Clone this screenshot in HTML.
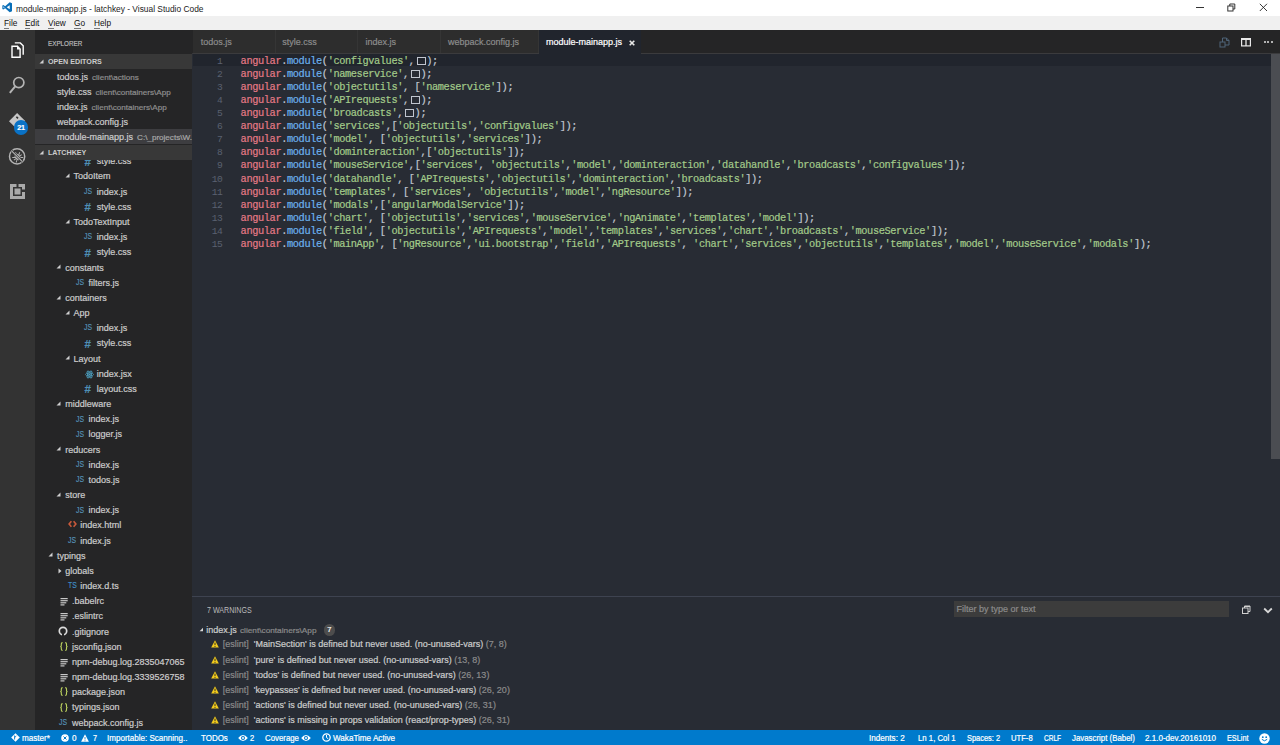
<!DOCTYPE html><html><head><meta charset="utf-8"><style>
*{margin:0;padding:0;box-sizing:border-box}
html,body{width:1280px;height:745px;overflow:hidden;background:#252526;font-family:"Liberation Sans",sans-serif}
.a{position:absolute;white-space:nowrap}
.a{-webkit-text-stroke-width:0.2px}
.mono{font-family:"Liberation Mono",monospace}
.lt{-webkit-text-stroke-width:0}
.box{display:inline-block;width:9px;height:8.5px;border:1px solid #c0c5ce;vertical-align:-1.2px;margin-left:2px;margin-right:0.58px}
</style></head><body>
<div class="a" style="left:0;top:0;width:1280px;height:15.5px;background:#fff"></div>
<div class="a" style="left:0;top:15.5px;width:1280px;height:14.5px;background:#f0f0f0"></div>
<svg class="a" style="left:1.7px;top:2.2px" width="10.5" height="10.5" viewBox="0 0 12 12">
<path d="M8.8 0.3 L11.6 1.5 V10.5 L8.8 11.7 L3.6 7.1 L1.5 8.6 L0.4 8 V4 L1.5 3.4 L3.6 4.9 Z M8.8 3.6 L5.4 6 L8.8 8.4 Z M1.7 4.8 V7.2 L3 6 Z" fill="#0a6fb8"/></svg>
<div class="a lt" style="left:16px;top:2.5px;font-size:8.4px;line-height:13px;color:#222">module-mainapp.js - latchkey - Visual Studio Code</div>
<div class="a lt" style="left:4px;top:17px;font-size:8.3px;line-height:13px;color:#111">File</div>
<div class="a" style="left:4px;top:28px;width:4.5px;height:0.8px;background:#777"></div>
<div class="a lt" style="left:25px;top:17px;font-size:8.3px;line-height:13px;color:#111">Edit</div>
<div class="a" style="left:25px;top:28px;width:5px;height:0.8px;background:#777"></div>
<div class="a lt" style="left:48px;top:17px;font-size:8.3px;line-height:13px;color:#111">View</div>
<div class="a" style="left:48px;top:28px;width:6px;height:0.8px;background:#777"></div>
<div class="a lt" style="left:74px;top:17px;font-size:8.3px;line-height:13px;color:#111">Go</div>
<div class="a" style="left:74px;top:28px;width:6.5px;height:0.8px;background:#777"></div>
<div class="a lt" style="left:94px;top:17px;font-size:8.3px;line-height:13px;color:#111">Help</div>
<div class="a" style="left:94px;top:28px;width:6px;height:0.8px;background:#777"></div>
<div class="a" style="left:1196px;top:6.6px;width:7.5px;height:1px;background:#333"></div>
<svg class="a" style="left:1227px;top:2.5px" width="9" height="9" viewBox="0 0 9 9"><rect x="0.8" y="3" width="5.2" height="5" fill="none" stroke="#333" stroke-width="1"/><path d="M2.8 3 V1 H7.8 V6 H6" fill="none" stroke="#333" stroke-width="1"/></svg>
<svg class="a" style="left:1258.5px;top:2.5px" width="9" height="9" viewBox="0 0 9 9"><path d="M0.8 0.8 L8 8 M8 0.8 L0.8 8" stroke="#222" stroke-width="0.9"/></svg>
<div class="a" style="left:0;top:29.6px;width:1280px;height:1px;background:#1a1a1a"></div>
<div class="a" style="left:0;top:30px;width:35px;height:700px;background:#333333"></div>
<div class="a" style="left:35px;top:30px;width:157px;height:700px;background:#252526"></div>
<div class="a" style="left:48px;top:38.5px;font-size:7.6px;line-height:10px;color:#bbb;transform:scaleX(0.83);transform-origin:0 0">EXPLORER</div>
<div class="a" style="left:35px;top:53.5px;width:157px;height:15.17px;background:#383838"></div>
<svg class="a" style="left:39.00px;top:58.70px" width="5" height="5" viewBox="0 0 5 5"><path d="M4.5 0.5 V4.5 H0.5 Z" fill="#cfcfcf"/></svg>
<div class="a" style="left:48.00px;top:53.70px;font-size:7.6px;line-height:15px;color:#cccccc;font-weight:bold;-webkit-text-stroke-width:0;transform:scaleX(0.94);transform-origin:0 50%">OPEN EDITORS</div>
<div class="a" style="left:57.00px;top:69.70px;font-size:9px;line-height:15px;color:#cccccc;">todos.js</div>
<div class="a" style="left:92.02px;top:69.70px;font-size:8.1px;line-height:15px;color:#8f8f8f;">client\actions</div>
<div class="a" style="left:57.00px;top:84.87px;font-size:9px;line-height:15px;color:#cccccc;">style.css</div>
<div class="a" style="left:95.51px;top:84.87px;font-size:8.1px;line-height:15px;color:#8f8f8f;">client\containers\App</div>
<div class="a" style="left:57.00px;top:100.04px;font-size:9px;line-height:15px;color:#cccccc;">index.js</div>
<div class="a" style="left:91.52px;top:100.04px;font-size:8.1px;line-height:15px;color:#8f8f8f;">client\containers\App</div>
<div class="a" style="left:57.00px;top:115.21px;font-size:9px;line-height:15px;color:#cccccc;">webpack.config.js</div>
<div class="a" style="left:35px;top:129.2px;width:157px;height:14.9px;background:#3d3d40"></div>
<div class="a" style="left:57.00px;top:130.38px;font-size:9px;line-height:15px;color:#cccccc;">module-mainapp.js</div>
<div class="a" style="left:137.04px;top:130.38px;font-size:8.1px;line-height:15px;color:#a8a8a8;">C:\_projects\W...</div>
<div class="a" style="left:35px;top:159.7px;width:157px;height:570.30px;overflow:hidden">
<div class="a" style="left:49.54px;top:-4.17px;font-size:11.5px;line-height:12px;font-weight:bold;color:#4f8fb5">#</div>
<div class="a" style="left:61.84px;top:-5.37px;font-size:9px;line-height:15px;color:#cccccc;">style.css</div>
<svg class="a" style="left:29.76px;top:13.50px" width="5" height="5" viewBox="0 0 5 5"><path d="M4.5 0.5 V4.5 H0.5 Z" fill="#cfcfcf"/></svg>
<div class="a" style="left:38.56px;top:9.80px;font-size:9px;line-height:15px;color:#cccccc;">TodoItem</div>
<div class="a" style="left:49.24px;top:27.27px;font-size:8.2px;line-height:10px;color:#5591b8;-webkit-text-stroke:0.15px #5591b8;transform:scaleX(0.84);transform-origin:0 0">JS</div>
<div class="a" style="left:61.84px;top:24.97px;font-size:9px;line-height:15px;color:#cccccc;">index.js</div>
<div class="a" style="left:49.54px;top:41.34px;font-size:11.5px;line-height:12px;font-weight:bold;color:#4f8fb5">#</div>
<div class="a" style="left:61.84px;top:40.14px;font-size:9px;line-height:15px;color:#cccccc;">style.css</div>
<svg class="a" style="left:29.76px;top:59.01px" width="5" height="5" viewBox="0 0 5 5"><path d="M4.5 0.5 V4.5 H0.5 Z" fill="#cfcfcf"/></svg>
<div class="a" style="left:38.56px;top:55.31px;font-size:9px;line-height:15px;color:#cccccc;">TodoTextInput</div>
<div class="a" style="left:49.24px;top:72.78px;font-size:8.2px;line-height:10px;color:#5591b8;-webkit-text-stroke:0.15px #5591b8;transform:scaleX(0.84);transform-origin:0 0">JS</div>
<div class="a" style="left:61.84px;top:70.48px;font-size:9px;line-height:15px;color:#cccccc;">index.js</div>
<div class="a" style="left:49.54px;top:86.85px;font-size:11.5px;line-height:12px;font-weight:bold;color:#4f8fb5">#</div>
<div class="a" style="left:61.84px;top:85.65px;font-size:9px;line-height:15px;color:#cccccc;">style.css</div>
<svg class="a" style="left:21.48px;top:104.52px" width="5" height="5" viewBox="0 0 5 5"><path d="M4.5 0.5 V4.5 H0.5 Z" fill="#cfcfcf"/></svg>
<div class="a" style="left:30.28px;top:100.82px;font-size:9px;line-height:15px;color:#cccccc;">constants</div>
<div class="a" style="left:40.96px;top:118.29px;font-size:8.2px;line-height:10px;color:#5591b8;-webkit-text-stroke:0.15px #5591b8;transform:scaleX(0.84);transform-origin:0 0">JS</div>
<div class="a" style="left:53.56px;top:115.99px;font-size:9px;line-height:15px;color:#cccccc;">filters.js</div>
<svg class="a" style="left:21.48px;top:134.86px" width="5" height="5" viewBox="0 0 5 5"><path d="M4.5 0.5 V4.5 H0.5 Z" fill="#cfcfcf"/></svg>
<div class="a" style="left:30.28px;top:131.16px;font-size:9px;line-height:15px;color:#cccccc;">containers</div>
<svg class="a" style="left:29.76px;top:150.03px" width="5" height="5" viewBox="0 0 5 5"><path d="M4.5 0.5 V4.5 H0.5 Z" fill="#cfcfcf"/></svg>
<div class="a" style="left:38.56px;top:146.33px;font-size:9px;line-height:15px;color:#cccccc;">App</div>
<div class="a" style="left:49.24px;top:163.80px;font-size:8.2px;line-height:10px;color:#5591b8;-webkit-text-stroke:0.15px #5591b8;transform:scaleX(0.84);transform-origin:0 0">JS</div>
<div class="a" style="left:61.84px;top:161.50px;font-size:9px;line-height:15px;color:#cccccc;">index.js</div>
<div class="a" style="left:49.54px;top:177.87px;font-size:11.5px;line-height:12px;font-weight:bold;color:#4f8fb5">#</div>
<div class="a" style="left:61.84px;top:176.67px;font-size:9px;line-height:15px;color:#cccccc;">style.css</div>
<svg class="a" style="left:29.76px;top:195.54px" width="5" height="5" viewBox="0 0 5 5"><path d="M4.5 0.5 V4.5 H0.5 Z" fill="#cfcfcf"/></svg>
<div class="a" style="left:38.56px;top:191.84px;font-size:9px;line-height:15px;color:#cccccc;">Layout</div>
<svg class="a" style="left:49.84px;top:210.01px" width="9" height="9" viewBox="0 0 9 9"><g fill="none" stroke="#4c9fc0" stroke-width="0.8"><ellipse cx="4.5" cy="4.5" rx="4" ry="1.6"/><ellipse cx="4.5" cy="4.5" rx="4" ry="1.6" transform="rotate(60 4.5 4.5)"/><ellipse cx="4.5" cy="4.5" rx="4" ry="1.6" transform="rotate(-60 4.5 4.5)"/></g><circle cx="4.5" cy="4.5" r="0.9" fill="#4c9fc0"/></svg>
<div class="a" style="left:61.84px;top:207.01px;font-size:9px;line-height:15px;color:#cccccc;">index.jsx</div>
<div class="a" style="left:49.54px;top:223.38px;font-size:11.5px;line-height:12px;font-weight:bold;color:#4f8fb5">#</div>
<div class="a" style="left:61.84px;top:222.18px;font-size:9px;line-height:15px;color:#cccccc;">layout.css</div>
<svg class="a" style="left:21.48px;top:241.05px" width="5" height="5" viewBox="0 0 5 5"><path d="M4.5 0.5 V4.5 H0.5 Z" fill="#cfcfcf"/></svg>
<div class="a" style="left:30.28px;top:237.35px;font-size:9px;line-height:15px;color:#cccccc;">middleware</div>
<div class="a" style="left:40.96px;top:254.82px;font-size:8.2px;line-height:10px;color:#5591b8;-webkit-text-stroke:0.15px #5591b8;transform:scaleX(0.84);transform-origin:0 0">JS</div>
<div class="a" style="left:53.56px;top:252.52px;font-size:9px;line-height:15px;color:#cccccc;">index.js</div>
<div class="a" style="left:40.96px;top:269.99px;font-size:8.2px;line-height:10px;color:#5591b8;-webkit-text-stroke:0.15px #5591b8;transform:scaleX(0.84);transform-origin:0 0">JS</div>
<div class="a" style="left:53.56px;top:267.69px;font-size:9px;line-height:15px;color:#cccccc;">logger.js</div>
<svg class="a" style="left:21.48px;top:286.56px" width="5" height="5" viewBox="0 0 5 5"><path d="M4.5 0.5 V4.5 H0.5 Z" fill="#cfcfcf"/></svg>
<div class="a" style="left:30.28px;top:282.86px;font-size:9px;line-height:15px;color:#cccccc;">reducers</div>
<div class="a" style="left:40.96px;top:300.33px;font-size:8.2px;line-height:10px;color:#5591b8;-webkit-text-stroke:0.15px #5591b8;transform:scaleX(0.84);transform-origin:0 0">JS</div>
<div class="a" style="left:53.56px;top:298.03px;font-size:9px;line-height:15px;color:#cccccc;">index.js</div>
<div class="a" style="left:40.96px;top:315.50px;font-size:8.2px;line-height:10px;color:#5591b8;-webkit-text-stroke:0.15px #5591b8;transform:scaleX(0.84);transform-origin:0 0">JS</div>
<div class="a" style="left:53.56px;top:313.20px;font-size:9px;line-height:15px;color:#cccccc;">todos.js</div>
<svg class="a" style="left:21.48px;top:332.07px" width="5" height="5" viewBox="0 0 5 5"><path d="M4.5 0.5 V4.5 H0.5 Z" fill="#cfcfcf"/></svg>
<div class="a" style="left:30.28px;top:328.37px;font-size:9px;line-height:15px;color:#cccccc;">store</div>
<div class="a" style="left:40.96px;top:345.84px;font-size:8.2px;line-height:10px;color:#5591b8;-webkit-text-stroke:0.15px #5591b8;transform:scaleX(0.84);transform-origin:0 0">JS</div>
<div class="a" style="left:53.56px;top:343.54px;font-size:9px;line-height:15px;color:#cccccc;">index.js</div>
<svg class="a" style="left:33.28px;top:360.71px" width="9" height="8" viewBox="0 0 9 8"><path d="M3.4 1.3 L1.1 4 L3.4 6.7 M5.6 1.3 L7.9 4 L5.6 6.7" fill="none" stroke="#c9593a" stroke-width="1.6"/></svg>
<div class="a" style="left:45.28px;top:358.71px;font-size:9px;line-height:15px;color:#cccccc;">index.html</div>
<div class="a" style="left:32.68px;top:376.18px;font-size:8.2px;line-height:10px;color:#5591b8;-webkit-text-stroke:0.15px #5591b8;transform:scaleX(0.84);transform-origin:0 0">JS</div>
<div class="a" style="left:45.28px;top:373.88px;font-size:9px;line-height:15px;color:#cccccc;">index.js</div>
<svg class="a" style="left:13.20px;top:392.75px" width="5" height="5" viewBox="0 0 5 5"><path d="M4.5 0.5 V4.5 H0.5 Z" fill="#cfcfcf"/></svg>
<div class="a" style="left:22.00px;top:389.05px;font-size:9px;line-height:15px;color:#cccccc;">typings</div>
<svg class="a" style="left:22.78px;top:408.22px" width="4" height="6" viewBox="0 0 4 6"><path d="M0.5 0.5 L3.5 3 L0.5 5.5 Z" fill="#cfcfcf"/></svg>
<div class="a" style="left:30.28px;top:404.22px;font-size:9px;line-height:15px;color:#cccccc;">globals</div>
<div class="a" style="left:32.68px;top:421.69px;font-size:8.2px;line-height:10px;color:#3f8fc6;-webkit-text-stroke:0.15px #3f8fc6;transform:scaleX(0.84);transform-origin:0 0">TS</div>
<div class="a" style="left:45.28px;top:419.39px;font-size:9px;line-height:15px;color:#cccccc;">index.d.ts</div>
<svg class="a" style="left:25.00px;top:437.56px" width="9" height="9" viewBox="0 0 9 9"><g fill="#c8c8c8"><rect x="0.5" y="1" width="7.2" height="1.2"/><rect x="0.5" y="3.1" width="7.2" height="1.2"/><rect x="0.5" y="5.2" width="5.8" height="1.2"/><rect x="0.5" y="7.3" width="4" height="1.2"/></g></svg>
<div class="a" style="left:37.00px;top:434.56px;font-size:9px;line-height:15px;color:#cccccc;">.babelrc</div>
<svg class="a" style="left:25.00px;top:452.73px" width="9" height="9" viewBox="0 0 9 9"><g fill="#c8c8c8"><rect x="0.5" y="1" width="7.2" height="1.2"/><rect x="0.5" y="3.1" width="7.2" height="1.2"/><rect x="0.5" y="5.2" width="5.8" height="1.2"/><rect x="0.5" y="7.3" width="4" height="1.2"/></g></svg>
<div class="a" style="left:37.00px;top:449.73px;font-size:9px;line-height:15px;color:#cccccc;">.eslintrc</div>
<svg class="a" style="left:23.40px;top:466.40px" width="10" height="10" viewBox="0 0 10 10"><circle cx="5" cy="5" r="3.7" fill="none" stroke="#dcdcdc" stroke-width="1.7"/><path d="M4 7 H6 V10 H4 Z" fill="#252526"/><path d="M5 4.5 V9" stroke="#252526" stroke-width="1.2"/></svg>
<div class="a" style="left:37.00px;top:464.90px;font-size:9px;line-height:15px;color:#cccccc;">.gitignore</div>
<svg class="a" style="left:24.70px;top:482.17px" width="8" height="9" viewBox="0 0 8 9"><g fill="none" stroke="#bcd35f" stroke-width="1.1"><path d="M2.6 0.6 Q1.3 0.6 1.3 2 V3.4 Q1.3 4.4 0.3 4.5 Q1.3 4.6 1.3 5.6 V7 Q1.3 8.4 2.6 8.4"/><path d="M5.2 0.6 Q6.5 0.6 6.5 2 V3.4 Q6.5 4.4 7.5 4.5 Q6.5 4.6 6.5 5.6 V7 Q6.5 8.4 5.2 8.4"/></g></svg>
<div class="a" style="left:37.00px;top:480.07px;font-size:9px;line-height:15px;color:#cccccc;">jsconfig.json</div>
<svg class="a" style="left:25.00px;top:498.24px" width="9" height="9" viewBox="0 0 9 9"><g fill="#c8c8c8"><rect x="0.5" y="1" width="7.2" height="1.2"/><rect x="0.5" y="3.1" width="7.2" height="1.2"/><rect x="0.5" y="5.2" width="5.8" height="1.2"/><rect x="0.5" y="7.3" width="4" height="1.2"/></g></svg>
<div class="a" style="left:37.00px;top:495.24px;font-size:9px;line-height:15px;color:#cccccc;">npm-debug.log.2835047065</div>
<svg class="a" style="left:25.00px;top:513.41px" width="9" height="9" viewBox="0 0 9 9"><g fill="#c8c8c8"><rect x="0.5" y="1" width="7.2" height="1.2"/><rect x="0.5" y="3.1" width="7.2" height="1.2"/><rect x="0.5" y="5.2" width="5.8" height="1.2"/><rect x="0.5" y="7.3" width="4" height="1.2"/></g></svg>
<div class="a" style="left:37.00px;top:510.41px;font-size:9px;line-height:15px;color:#cccccc;">npm-debug.log.3339526758</div>
<svg class="a" style="left:24.70px;top:527.68px" width="8" height="9" viewBox="0 0 8 9"><g fill="none" stroke="#bcd35f" stroke-width="1.1"><path d="M2.6 0.6 Q1.3 0.6 1.3 2 V3.4 Q1.3 4.4 0.3 4.5 Q1.3 4.6 1.3 5.6 V7 Q1.3 8.4 2.6 8.4"/><path d="M5.2 0.6 Q6.5 0.6 6.5 2 V3.4 Q6.5 4.4 7.5 4.5 Q6.5 4.6 6.5 5.6 V7 Q6.5 8.4 5.2 8.4"/></g></svg>
<div class="a" style="left:37.00px;top:525.58px;font-size:9px;line-height:15px;color:#cccccc;">package.json</div>
<svg class="a" style="left:24.70px;top:542.85px" width="8" height="9" viewBox="0 0 8 9"><g fill="none" stroke="#bcd35f" stroke-width="1.1"><path d="M2.6 0.6 Q1.3 0.6 1.3 2 V3.4 Q1.3 4.4 0.3 4.5 Q1.3 4.6 1.3 5.6 V7 Q1.3 8.4 2.6 8.4"/><path d="M5.2 0.6 Q6.5 0.6 6.5 2 V3.4 Q6.5 4.4 7.5 4.5 Q6.5 4.6 6.5 5.6 V7 Q6.5 8.4 5.2 8.4"/></g></svg>
<div class="a" style="left:37.00px;top:540.75px;font-size:9px;line-height:15px;color:#cccccc;">typings.json</div>
<div class="a" style="left:24.40px;top:558.22px;font-size:8.2px;line-height:10px;color:#5591b8;-webkit-text-stroke:0.15px #5591b8;transform:scaleX(0.84);transform-origin:0 0">JS</div>
<div class="a" style="left:37.00px;top:555.92px;font-size:9px;line-height:15px;color:#cccccc;">webpack.config.js</div>
</div>
<div class="a" style="left:35px;top:144.5px;width:157px;height:15.17px;background:#383838"></div>
<svg class="a" style="left:39.00px;top:149.60px" width="5" height="5" viewBox="0 0 5 5"><path d="M4.5 0.5 V4.5 H0.5 Z" fill="#cfcfcf"/></svg>
<div class="a" style="left:48.00px;top:144.60px;font-size:7.6px;line-height:15px;color:#cccccc;font-weight:bold;-webkit-text-stroke-width:0;transform:scaleX(0.94);transform-origin:0 50%">LATCHKEY</div>
<div class="a" style="left:192px;top:30px;width:1088px;height:24px;background:#252526"></div>
<div class="a" style="left:192px;top:53px;width:1088px;height:1px;background:#37373a"></div>
<div class="a" style="left:192px;top:54px;width:1088px;height:543px;background:#282c34"></div>
<div class="a" style="left:192px;top:597px;width:1088px;height:133px;background:#282c34"></div>
<div class="a" style="left:192px;top:596px;width:1088px;height:1px;background:#3e4350"></div>
<div class="a" style="left:193px;top:54.4px;width:1078px;height:12px;background:#21252d"></div>
<div class="a mono lt" style="left:200.6px;top:54.90px;width:22px;text-align:right;font-size:9.650px;line-height:13.07px;color:#5a6170;letter-spacing:-0.3px">1</div>
<div class="a mono" style="left:240.6px;top:54.90px;font-size:10.3px;line-height:13.07px;letter-spacing:-0.380px"><span style="color:#e57a86">angular</span><span style="color:#c0c6d0">.</span><span style="color:#6cb2ee">module</span><span style="color:#c0c6d0">(</span><span style="color:#a3cb8a">&#x27;configvalues&#x27;</span><span style="color:#c0c6d0">,</span><span class="box"></span><span style="color:#c0c6d0">);</span></div>
<div class="a mono lt" style="left:200.6px;top:67.97px;width:22px;text-align:right;font-size:9.650px;line-height:13.07px;color:#5a6170;letter-spacing:-0.3px">2</div>
<div class="a mono" style="left:240.6px;top:67.97px;font-size:10.3px;line-height:13.07px;letter-spacing:-0.380px"><span style="color:#e57a86">angular</span><span style="color:#c0c6d0">.</span><span style="color:#6cb2ee">module</span><span style="color:#c0c6d0">(</span><span style="color:#a3cb8a">&#x27;nameservice&#x27;</span><span style="color:#c0c6d0">,</span><span class="box"></span><span style="color:#c0c6d0">);</span></div>
<div class="a mono lt" style="left:200.6px;top:81.04px;width:22px;text-align:right;font-size:9.650px;line-height:13.07px;color:#5a6170;letter-spacing:-0.3px">3</div>
<div class="a mono" style="left:240.6px;top:81.04px;font-size:10.3px;line-height:13.07px;letter-spacing:-0.380px"><span style="color:#e57a86">angular</span><span style="color:#c0c6d0">.</span><span style="color:#6cb2ee">module</span><span style="color:#c0c6d0">(</span><span style="color:#a3cb8a">&#x27;objectutils&#x27;</span><span style="color:#c0c6d0">, [</span><span style="color:#a3cb8a">&#x27;nameservice&#x27;</span><span style="color:#c0c6d0">]);</span></div>
<div class="a mono lt" style="left:200.6px;top:94.11px;width:22px;text-align:right;font-size:9.650px;line-height:13.07px;color:#5a6170;letter-spacing:-0.3px">4</div>
<div class="a mono" style="left:240.6px;top:94.11px;font-size:10.3px;line-height:13.07px;letter-spacing:-0.380px"><span style="color:#e57a86">angular</span><span style="color:#c0c6d0">.</span><span style="color:#6cb2ee">module</span><span style="color:#c0c6d0">(</span><span style="color:#a3cb8a">&#x27;APIrequests&#x27;</span><span style="color:#c0c6d0">,</span><span class="box"></span><span style="color:#c0c6d0">);</span></div>
<div class="a mono lt" style="left:200.6px;top:107.18px;width:22px;text-align:right;font-size:9.650px;line-height:13.07px;color:#5a6170;letter-spacing:-0.3px">5</div>
<div class="a mono" style="left:240.6px;top:107.18px;font-size:10.3px;line-height:13.07px;letter-spacing:-0.380px"><span style="color:#e57a86">angular</span><span style="color:#c0c6d0">.</span><span style="color:#6cb2ee">module</span><span style="color:#c0c6d0">(</span><span style="color:#a3cb8a">&#x27;broadcasts&#x27;</span><span style="color:#c0c6d0">,</span><span class="box"></span><span style="color:#c0c6d0">);</span></div>
<div class="a mono lt" style="left:200.6px;top:120.25px;width:22px;text-align:right;font-size:9.650px;line-height:13.07px;color:#5a6170;letter-spacing:-0.3px">6</div>
<div class="a mono" style="left:240.6px;top:120.25px;font-size:10.3px;line-height:13.07px;letter-spacing:-0.380px"><span style="color:#e57a86">angular</span><span style="color:#c0c6d0">.</span><span style="color:#6cb2ee">module</span><span style="color:#c0c6d0">(</span><span style="color:#a3cb8a">&#x27;services&#x27;</span><span style="color:#c0c6d0">,[</span><span style="color:#a3cb8a">&#x27;objectutils&#x27;</span><span style="color:#c0c6d0">,</span><span style="color:#a3cb8a">&#x27;configvalues&#x27;</span><span style="color:#c0c6d0">]);</span></div>
<div class="a mono lt" style="left:200.6px;top:133.32px;width:22px;text-align:right;font-size:9.650px;line-height:13.07px;color:#5a6170;letter-spacing:-0.3px">7</div>
<div class="a mono" style="left:240.6px;top:133.32px;font-size:10.3px;line-height:13.07px;letter-spacing:-0.380px"><span style="color:#e57a86">angular</span><span style="color:#c0c6d0">.</span><span style="color:#6cb2ee">module</span><span style="color:#c0c6d0">(</span><span style="color:#a3cb8a">&#x27;model&#x27;</span><span style="color:#c0c6d0">, [</span><span style="color:#a3cb8a">&#x27;objectutils&#x27;</span><span style="color:#c0c6d0">,</span><span style="color:#a3cb8a">&#x27;services&#x27;</span><span style="color:#c0c6d0">]);</span></div>
<div class="a mono lt" style="left:200.6px;top:146.39px;width:22px;text-align:right;font-size:9.650px;line-height:13.07px;color:#5a6170;letter-spacing:-0.3px">8</div>
<div class="a mono" style="left:240.6px;top:146.39px;font-size:10.3px;line-height:13.07px;letter-spacing:-0.380px"><span style="color:#e57a86">angular</span><span style="color:#c0c6d0">.</span><span style="color:#6cb2ee">module</span><span style="color:#c0c6d0">(</span><span style="color:#a3cb8a">&#x27;dominteraction&#x27;</span><span style="color:#c0c6d0">,[</span><span style="color:#a3cb8a">&#x27;objectutils&#x27;</span><span style="color:#c0c6d0">]);</span></div>
<div class="a mono lt" style="left:200.6px;top:159.46px;width:22px;text-align:right;font-size:9.650px;line-height:13.07px;color:#5a6170;letter-spacing:-0.3px">9</div>
<div class="a mono" style="left:240.6px;top:159.46px;font-size:10.3px;line-height:13.07px;letter-spacing:-0.380px"><span style="color:#e57a86">angular</span><span style="color:#c0c6d0">.</span><span style="color:#6cb2ee">module</span><span style="color:#c0c6d0">(</span><span style="color:#a3cb8a">&#x27;mouseService&#x27;</span><span style="color:#c0c6d0">,[</span><span style="color:#a3cb8a">&#x27;services&#x27;</span><span style="color:#c0c6d0">, </span><span style="color:#a3cb8a">&#x27;objectutils&#x27;</span><span style="color:#c0c6d0">,</span><span style="color:#a3cb8a">&#x27;model&#x27;</span><span style="color:#c0c6d0">,</span><span style="color:#a3cb8a">&#x27;dominteraction&#x27;</span><span style="color:#c0c6d0">,</span><span style="color:#a3cb8a">&#x27;datahandle&#x27;</span><span style="color:#c0c6d0">,</span><span style="color:#a3cb8a">&#x27;broadcasts&#x27;</span><span style="color:#c0c6d0">,</span><span style="color:#a3cb8a">&#x27;configvalues&#x27;</span><span style="color:#c0c6d0">]);</span></div>
<div class="a mono lt" style="left:200.6px;top:172.53px;width:22px;text-align:right;font-size:9.650px;line-height:13.07px;color:#5a6170;letter-spacing:-0.3px">10</div>
<div class="a mono" style="left:240.6px;top:172.53px;font-size:10.3px;line-height:13.07px;letter-spacing:-0.380px"><span style="color:#e57a86">angular</span><span style="color:#c0c6d0">.</span><span style="color:#6cb2ee">module</span><span style="color:#c0c6d0">(</span><span style="color:#a3cb8a">&#x27;datahandle&#x27;</span><span style="color:#c0c6d0">, [</span><span style="color:#a3cb8a">&#x27;APIrequests&#x27;</span><span style="color:#c0c6d0">,</span><span style="color:#a3cb8a">&#x27;objectutils&#x27;</span><span style="color:#c0c6d0">,</span><span style="color:#a3cb8a">&#x27;dominteraction&#x27;</span><span style="color:#c0c6d0">,</span><span style="color:#a3cb8a">&#x27;broadcasts&#x27;</span><span style="color:#c0c6d0">]);</span></div>
<div class="a mono lt" style="left:200.6px;top:185.60px;width:22px;text-align:right;font-size:9.650px;line-height:13.07px;color:#5a6170;letter-spacing:-0.3px">11</div>
<div class="a mono" style="left:240.6px;top:185.60px;font-size:10.3px;line-height:13.07px;letter-spacing:-0.380px"><span style="color:#e57a86">angular</span><span style="color:#c0c6d0">.</span><span style="color:#6cb2ee">module</span><span style="color:#c0c6d0">(</span><span style="color:#a3cb8a">&#x27;templates&#x27;</span><span style="color:#c0c6d0">, [</span><span style="color:#a3cb8a">&#x27;services&#x27;</span><span style="color:#c0c6d0">, </span><span style="color:#a3cb8a">&#x27;objectutils&#x27;</span><span style="color:#c0c6d0">,</span><span style="color:#a3cb8a">&#x27;model&#x27;</span><span style="color:#c0c6d0">,</span><span style="color:#a3cb8a">&#x27;ngResource&#x27;</span><span style="color:#c0c6d0">]);</span></div>
<div class="a mono lt" style="left:200.6px;top:198.67px;width:22px;text-align:right;font-size:9.650px;line-height:13.07px;color:#5a6170;letter-spacing:-0.3px">12</div>
<div class="a mono" style="left:240.6px;top:198.67px;font-size:10.3px;line-height:13.07px;letter-spacing:-0.380px"><span style="color:#e57a86">angular</span><span style="color:#c0c6d0">.</span><span style="color:#6cb2ee">module</span><span style="color:#c0c6d0">(</span><span style="color:#a3cb8a">&#x27;modals&#x27;</span><span style="color:#c0c6d0">,[</span><span style="color:#a3cb8a">&#x27;angularModalService&#x27;</span><span style="color:#c0c6d0">]);</span></div>
<div class="a mono lt" style="left:200.6px;top:211.74px;width:22px;text-align:right;font-size:9.650px;line-height:13.07px;color:#5a6170;letter-spacing:-0.3px">13</div>
<div class="a mono" style="left:240.6px;top:211.74px;font-size:10.3px;line-height:13.07px;letter-spacing:-0.380px"><span style="color:#e57a86">angular</span><span style="color:#c0c6d0">.</span><span style="color:#6cb2ee">module</span><span style="color:#c0c6d0">(</span><span style="color:#a3cb8a">&#x27;chart&#x27;</span><span style="color:#c0c6d0">, [</span><span style="color:#a3cb8a">&#x27;objectutils&#x27;</span><span style="color:#c0c6d0">,</span><span style="color:#a3cb8a">&#x27;services&#x27;</span><span style="color:#c0c6d0">,</span><span style="color:#a3cb8a">&#x27;mouseService&#x27;</span><span style="color:#c0c6d0">,</span><span style="color:#a3cb8a">&#x27;ngAnimate&#x27;</span><span style="color:#c0c6d0">,</span><span style="color:#a3cb8a">&#x27;templates&#x27;</span><span style="color:#c0c6d0">,</span><span style="color:#a3cb8a">&#x27;model&#x27;</span><span style="color:#c0c6d0">]);</span></div>
<div class="a mono lt" style="left:200.6px;top:224.81px;width:22px;text-align:right;font-size:9.650px;line-height:13.07px;color:#5a6170;letter-spacing:-0.3px">14</div>
<div class="a mono" style="left:240.6px;top:224.81px;font-size:10.3px;line-height:13.07px;letter-spacing:-0.380px"><span style="color:#e57a86">angular</span><span style="color:#c0c6d0">.</span><span style="color:#6cb2ee">module</span><span style="color:#c0c6d0">(</span><span style="color:#a3cb8a">&#x27;field&#x27;</span><span style="color:#c0c6d0">, [</span><span style="color:#a3cb8a">&#x27;objectutils&#x27;</span><span style="color:#c0c6d0">,</span><span style="color:#a3cb8a">&#x27;APIrequests&#x27;</span><span style="color:#c0c6d0">,</span><span style="color:#a3cb8a">&#x27;model&#x27;</span><span style="color:#c0c6d0">,</span><span style="color:#a3cb8a">&#x27;templates&#x27;</span><span style="color:#c0c6d0">,</span><span style="color:#a3cb8a">&#x27;services&#x27;</span><span style="color:#c0c6d0">,</span><span style="color:#a3cb8a">&#x27;chart&#x27;</span><span style="color:#c0c6d0">,</span><span style="color:#a3cb8a">&#x27;broadcasts&#x27;</span><span style="color:#c0c6d0">,</span><span style="color:#a3cb8a">&#x27;mouseService&#x27;</span><span style="color:#c0c6d0">]);</span></div>
<div class="a mono lt" style="left:200.6px;top:237.88px;width:22px;text-align:right;font-size:9.650px;line-height:13.07px;color:#5a6170;letter-spacing:-0.3px">15</div>
<div class="a mono" style="left:240.6px;top:237.88px;font-size:10.3px;line-height:13.07px;letter-spacing:-0.380px"><span style="color:#e57a86">angular</span><span style="color:#c0c6d0">.</span><span style="color:#6cb2ee">module</span><span style="color:#c0c6d0">(</span><span style="color:#a3cb8a">&#x27;mainApp&#x27;</span><span style="color:#c0c6d0">, [</span><span style="color:#a3cb8a">&#x27;ngResource&#x27;</span><span style="color:#c0c6d0">,</span><span style="color:#a3cb8a">&#x27;ui.bootstrap&#x27;</span><span style="color:#c0c6d0">,</span><span style="color:#a3cb8a">&#x27;field&#x27;</span><span style="color:#c0c6d0">,</span><span style="color:#a3cb8a">&#x27;APIrequests&#x27;</span><span style="color:#c0c6d0">, </span><span style="color:#a3cb8a">&#x27;chart&#x27;</span><span style="color:#c0c6d0">,</span><span style="color:#a3cb8a">&#x27;services&#x27;</span><span style="color:#c0c6d0">,</span><span style="color:#a3cb8a">&#x27;objectutils&#x27;</span><span style="color:#c0c6d0">,</span><span style="color:#a3cb8a">&#x27;templates&#x27;</span><span style="color:#c0c6d0">,</span><span style="color:#a3cb8a">&#x27;model&#x27;</span><span style="color:#c0c6d0">,</span><span style="color:#a3cb8a">&#x27;mouseService&#x27;</span><span style="color:#c0c6d0">,</span><span style="color:#a3cb8a">&#x27;modals&#x27;</span><span style="color:#c0c6d0">]);</span></div>
<div class="a" style="left:193.00px;top:30px;width:82.70px;height:23px;background:#2d2d2d;border-right:1px solid #353535"></div>
<div class="a" style="left:200.80px;top:35.10px;font-size:9px;line-height:15px;color:#8c8c8c;">todos.js</div>
<div class="a" style="left:275.70px;top:30px;width:82.30px;height:23px;background:#2d2d2d;border-right:1px solid #353535"></div>
<div class="a" style="left:282.30px;top:35.10px;font-size:9px;line-height:15px;color:#8c8c8c;">style.css</div>
<div class="a" style="left:358.00px;top:30px;width:83.00px;height:23px;background:#2d2d2d;border-right:1px solid #353535"></div>
<div class="a" style="left:365.40px;top:35.10px;font-size:9px;line-height:15px;color:#8c8c8c;">index.js</div>
<div class="a" style="left:441.00px;top:30px;width:97.60px;height:23px;background:#2d2d2d;border-right:1px solid #353535"></div>
<div class="a" style="left:448.00px;top:35.10px;font-size:9px;line-height:15px;color:#8c8c8c;">webpack.config.js</div>
<div class="a" style="left:193px;top:53px;width:1087px;height:1px;background:#3b3b3d"></div>
<div class="a" style="left:538.6px;top:30px;width:102.4px;height:24.5px;background:#21252d"></div>
<div class="a" style="left:546.00px;top:35.30px;font-size:9px;line-height:15px;color:#ffffff;">module-mainapp.js</div>
<svg class="a" style="left:628.5px;top:39.5px" width="6" height="6" viewBox="0 0 6 6"><path d="M0.7 0.7 L5.3 5.3 M5.3 0.7 L0.7 5.3" stroke="#e8e8e8" stroke-width="1.6"/></svg>
<svg class="a" style="left:1218.5px;top:36.5px" width="11" height="11" viewBox="0 0 11 11"><g fill="none" stroke="#4f6478" stroke-width="1"><rect x="1" y="5" width="5" height="5"/><path d="M3.5 5 V1 H7.5 L10 3.5 V8 H6"/><path d="M7.5 1 V3.5 H10"/></g></svg>
<svg class="a" style="left:1241px;top:38px" width="10" height="8.5" viewBox="0 0 10 8.5"><rect x="0.6" y="0.6" width="8.8" height="7.3" fill="none" stroke="#e8e8e8" stroke-width="1.2"/><rect x="0" y="0" width="10" height="2" fill="#e8e8e8"/><path d="M5 0.5 V8" stroke="#e8e8e8" stroke-width="1.3"/></svg>
<div class="a" style="left:1263.60px;top:40.6px;width:2.4px;height:2.4px;border-radius:50%;background:#e0e0e0"></div>
<div class="a" style="left:1267.10px;top:40.6px;width:2.4px;height:2.4px;border-radius:50%;background:#e0e0e0"></div>
<div class="a" style="left:1270.60px;top:40.6px;width:2.4px;height:2.4px;border-radius:50%;background:#e0e0e0"></div>
<svg class="a" style="left:0px;top:30px" width="35" height="40" viewBox="0 30 35 40"><g fill="none" stroke="#ffffff" stroke-width="1.4"><path d="M12 46.3 H17.4 L20.1 49 V57.3 H12 Z"/><path d="M14.8 42.9 H20.3 L23.2 45.8 V54.8"/></g><path d="M17 45.6 V49.4 H20.8 Z" fill="#ffffff"/></svg>
<svg class="a" style="left:0px;top:70px" width="35" height="30" viewBox="0 70 35 30"><circle cx="18.8" cy="82.6" r="5.1" fill="none" stroke="#b4b4b4" stroke-width="1.7"/><path d="M15.2 86.4 L9.8 92.8" stroke="#b4b4b4" stroke-width="2"/></svg>
<svg class="a" style="left:0px;top:105px" width="35" height="35" viewBox="0 105 35 35"><path d="M9 121.3 L17.1 113 L25.2 121 L17.1 129.3 Z" fill="#c6c6c6"/><path d="M16.4 116.8 L18 118.4" stroke="#2a2a2a" stroke-width="1.6"/></svg>
<div class="a" style="left:13.8px;top:120.2px;width:14.4px;height:14.4px;border-radius:50%;background:#0a72c6"></div>
<div class="a" style="left:14.00px;top:122.50px;font-size:7.2px;line-height:10px;color:#ffffff;font-weight:bold;width:14px;text-align:center;letter-spacing:-0.3px">21</div>
<svg class="a" style="left:0px;top:140px" width="35" height="35" viewBox="0 140 35 35"><g stroke="#b4b4b4"><circle cx="17.1" cy="156.4" r="7.6" fill="none" stroke-width="1.5"/><g transform="rotate(-35 17.1 156.4)"><ellipse cx="17.1" cy="157.2" rx="2.6" ry="3.4" fill="#b4b4b4" stroke="none"/><circle cx="17.1" cy="153.2" r="1.5" fill="#b4b4b4" stroke="none"/><path d="M12.5 154.5 L14.8 156 M12.3 157.6 H14.6 M12.8 160.8 L14.8 159.4 M21.7 154.5 L19.4 156 M21.9 157.6 H19.6 M21.4 160.8 L19.4 159.4" stroke-width="1" fill="none"/></g><path d="M11.6 150.9 L22.6 161.9" stroke="#333" stroke-width="2.4"/><path d="M11.6 150.9 L22.6 161.9" stroke-width="1.2"/></g></svg>
<svg class="a" style="left:10px;top:184px" width="15" height="15" viewBox="0 0 15 15"><g fill="#a9a9a9"><rect x="0" y="0" width="6.5" height="3"/><rect x="0" y="0" width="3" height="15"/><rect x="0" y="12" width="15" height="3"/><rect x="12" y="8" width="3" height="7"/><rect x="8.5" y="0" width="6.5" height="3"/><rect x="12" y="0" width="3" height="5.5"/><rect x="4.5" y="4.5" width="6" height="6"/></g></svg>
<div class="a" style="left:206.80px;top:604.20px;font-size:8.3px;line-height:12px;color:#bbbbbb;transform:scaleX(0.8553);transform-origin:0 50%;-webkit-text-stroke-width:0">7 WARNINGS</div>
<div class="a" style="left:953.5px;top:601px;width:275.5px;height:15.5px;background:#3c3c3c"></div>
<div class="a" style="left:956.50px;top:602.40px;font-size:9px;line-height:15px;color:#8b8b8b;">Filter by type or text</div>
<svg class="a" style="left:1241.5px;top:605px" width="9" height="9" viewBox="0 0 9 9"><g fill="none" stroke="#d0d0d0" stroke-width="1"><rect x="0.5" y="3" width="5.5" height="5.5"/><path d="M2.5 3 V1 H8 V6.5 H6"/><path d="M2.5 1.5 H8"/></g></svg>
<svg class="a" style="left:1262.5px;top:606.5px" width="10" height="7" viewBox="0 0 10 7"><path d="M1.2 1.5 L5 5.2 L8.8 1.5" fill="none" stroke="#d8d8d8" stroke-width="1.8"/></svg>
<svg class="a" style="left:199.2px;top:627.2px" width="5" height="5" viewBox="0 0 5 5"><path d="M4 0.8 V4.2 H0.6 Z" fill="#d8d8d8"/></svg>
<div class="a" style="left:206.25px;top:622.80px;font-size:9px;line-height:15px;color:#cccccc;">index.js</div>
<div class="a" style="left:240.00px;top:622.80px;font-size:8.1px;line-height:15px;color:#8b8b8b;transform:scaleX(1.0187);transform-origin:0 50%;">client\containers\App</div>
<div class="a" style="left:323.5px;top:623.8px;width:11.8px;height:11.8px;border-radius:50%;background:#4d4d4d"></div>
<div class="a" style="left:323.50px;top:623.80px;font-size:7.6px;line-height:12px;color:#ffffff;width:11.8px;text-align:center">7</div>
<svg class="a" style="left:211px;top:640.30px" width="8" height="8" viewBox="0 0 8 8"><path d="M4 0.3 L7.8 7.6 H0.2 Z" fill="#f2cb1d"/><path d="M4 2.6 V5.2 M4 6 V6.9" stroke="#1e1e1e" stroke-width="0.9"/></svg>
<div class="a" style="left:222.80px;top:637.40px;font-size:9px;line-height:15px;color:#8b8b8b;">[eslint]</div>
<div class="a" style="left:253.81px;top:637.40px;font-size:9px;line-height:15px;color:#cccccc;">'MainSection' is defined but never used. (no-unused-vars)</div>
<div class="a" style="left:485.87px;top:637.40px;font-size:9px;line-height:15px;color:#8b8b8b;">(7, 8)</div>
<svg class="a" style="left:211px;top:655.50px" width="8" height="8" viewBox="0 0 8 8"><path d="M4 0.3 L7.8 7.6 H0.2 Z" fill="#f2cb1d"/><path d="M4 2.6 V5.2 M4 6 V6.9" stroke="#1e1e1e" stroke-width="0.9"/></svg>
<div class="a" style="left:222.80px;top:652.60px;font-size:9px;line-height:15px;color:#8b8b8b;">[eslint]</div>
<div class="a" style="left:253.81px;top:652.60px;font-size:9px;line-height:15px;color:#cccccc;">'pure' is defined but never used. (no-unused-vars)</div>
<div class="a" style="left:454.36px;top:652.60px;font-size:9px;line-height:15px;color:#8b8b8b;">(13, 8)</div>
<svg class="a" style="left:211px;top:670.70px" width="8" height="8" viewBox="0 0 8 8"><path d="M4 0.3 L7.8 7.6 H0.2 Z" fill="#f2cb1d"/><path d="M4 2.6 V5.2 M4 6 V6.9" stroke="#1e1e1e" stroke-width="0.9"/></svg>
<div class="a" style="left:222.80px;top:667.80px;font-size:9px;line-height:15px;color:#8b8b8b;">[eslint]</div>
<div class="a" style="left:253.81px;top:667.80px;font-size:9px;line-height:15px;color:#cccccc;">'todos' is defined but never used. (no-unused-vars)</div>
<div class="a" style="left:458.36px;top:667.80px;font-size:9px;line-height:15px;color:#8b8b8b;">(26, 13)</div>
<svg class="a" style="left:211px;top:685.90px" width="8" height="8" viewBox="0 0 8 8"><path d="M4 0.3 L7.8 7.6 H0.2 Z" fill="#f2cb1d"/><path d="M4 2.6 V5.2 M4 6 V6.9" stroke="#1e1e1e" stroke-width="0.9"/></svg>
<div class="a" style="left:222.80px;top:683.00px;font-size:9px;line-height:15px;color:#8b8b8b;">[eslint]</div>
<div class="a" style="left:253.81px;top:683.00px;font-size:9px;line-height:15px;color:#cccccc;">'keypasses' is defined but never used. (no-unused-vars)</div>
<div class="a" style="left:478.87px;top:683.00px;font-size:9px;line-height:15px;color:#8b8b8b;">(26, 20)</div>
<svg class="a" style="left:211px;top:701.10px" width="8" height="8" viewBox="0 0 8 8"><path d="M4 0.3 L7.8 7.6 H0.2 Z" fill="#f2cb1d"/><path d="M4 2.6 V5.2 M4 6 V6.9" stroke="#1e1e1e" stroke-width="0.9"/></svg>
<div class="a" style="left:222.80px;top:698.20px;font-size:9px;line-height:15px;color:#8b8b8b;">[eslint]</div>
<div class="a" style="left:253.81px;top:698.20px;font-size:9px;line-height:15px;color:#cccccc;">'actions' is defined but never used. (no-unused-vars)</div>
<div class="a" style="left:464.86px;top:698.20px;font-size:9px;line-height:15px;color:#8b8b8b;">(26, 31)</div>
<svg class="a" style="left:211px;top:716.30px" width="8" height="8" viewBox="0 0 8 8"><path d="M4 0.3 L7.8 7.6 H0.2 Z" fill="#f2cb1d"/><path d="M4 2.6 V5.2 M4 6 V6.9" stroke="#1e1e1e" stroke-width="0.9"/></svg>
<div class="a" style="left:222.80px;top:713.40px;font-size:9px;line-height:15px;color:#8b8b8b;">[eslint]</div>
<div class="a" style="left:253.81px;top:713.40px;font-size:9px;line-height:15px;color:#cccccc;">'actions' is missing in props validation (react/prop-types)</div>
<div class="a" style="left:478.84px;top:713.40px;font-size:9px;line-height:15px;color:#8b8b8b;">(26, 31)</div>
<div class="a" style="left:1270.5px;top:54.4px;width:9.5px;height:404.6px;background:#4b4d52"></div>
<div class="a" style="left:0;top:729.5px;width:1280px;height:15.5px;background:#007acc"></div>
<svg class="a" style="left:10.5px;top:733px" width="9" height="9" viewBox="0 0 9 9"><path d="M4.5 0.2 L8.8 4.5 L4.5 8.8 L0.2 4.5 Z" fill="#fff"/><path d="M3.6 2.5 V6.5 M3.6 4.5 L5.3 3" stroke="#007acc" stroke-width="0.9" fill="none"/></svg>
<div class="a" style="left:22.00px;top:730.80px;font-size:8.28px;line-height:15px;color:#ffffff;transform:scaleX(0.9815);transform-origin:0 50%;">master*</div>
<svg class="a" style="left:60.5px;top:733.5px" width="8" height="8" viewBox="0 0 8 8"><circle cx="4" cy="4" r="3.8" fill="#fff"/><path d="M2.5 2.5 L5.5 5.5 M5.5 2.5 L2.5 5.5" stroke="#007acc" stroke-width="1"/></svg>
<div class="a" style="left:72.00px;top:730.80px;font-size:8.28px;line-height:15px;color:#ffffff;transform:scaleX(0.9772);transform-origin:0 50%;">0</div>
<svg class="a" style="left:80.5px;top:733.5px" width="8" height="8" viewBox="0 0 8 8"><path d="M4 0.2 L7.9 7.8 H0.1 Z" fill="#fff"/><path d="M4 3 V5.5 M4 6.3 V7.2" stroke="#007acc" stroke-width="0.8"/></svg>
<div class="a" style="left:92.50px;top:730.80px;font-size:8.28px;line-height:15px;color:#ffffff;transform:scaleX(0.8686);transform-origin:0 50%;">7</div>
<div class="a" style="left:106.60px;top:730.80px;font-size:8.28px;line-height:15px;color:#ffffff;transform:scaleX(0.9729);transform-origin:0 50%;">Importable: Scanning..</div>
<div class="a" style="left:200.80px;top:730.80px;font-size:8.28px;line-height:15px;color:#ffffff;transform:scaleX(0.9639);transform-origin:0 50%;">TODOs</div>
<svg class="a" style="left:237.8px;top:733.8px" width="10" height="8" viewBox="0 0 10 8"><path d="M0.2 4 Q5 -2.2 9.8 4 Q5 10.2 0.2 4 Z" fill="#fff"/><circle cx="5" cy="4" r="2" fill="#007acc"/><circle cx="5" cy="4" r="1" fill="#fff"/></svg>
<div class="a" style="left:250.00px;top:730.80px;font-size:8.28px;line-height:15px;color:#ffffff;transform:scaleX(0.9121);transform-origin:0 50%;">2</div>
<div class="a" style="left:265.20px;top:730.80px;font-size:8.28px;line-height:15px;color:#ffffff;transform:scaleX(0.9470);transform-origin:0 50%;">Coverage</div>
<svg class="a" style="left:301.2px;top:733.8px" width="10" height="8" viewBox="0 0 10 8"><path d="M0.2 4 Q5 -2.2 9.8 4 Q5 10.2 0.2 4 Z" fill="#fff"/><circle cx="5" cy="4" r="2" fill="#007acc"/><circle cx="5" cy="4" r="1" fill="#fff"/></svg>
<svg class="a" style="left:321.5px;top:733px" width="9" height="9" viewBox="0 0 9 9"><circle cx="4.5" cy="4.5" r="3.7" fill="none" stroke="#fff" stroke-width="1.3"/><path d="M4.5 2 V4.5 L6.3 5.8" stroke="#fff" stroke-width="1" fill="none"/></svg>
<div class="a" style="left:332.50px;top:730.80px;font-size:8.28px;line-height:15px;color:#ffffff;transform:scaleX(0.9804);transform-origin:0 50%;">WakaTime Active</div>
<div class="a" style="left:869.20px;top:730.80px;font-size:8.28px;line-height:15px;color:#ffffff;transform:scaleX(0.9844);transform-origin:0 50%;">Indents: 2</div>
<div class="a" style="left:918.40px;top:730.80px;font-size:8.28px;line-height:15px;color:#ffffff;transform:scaleX(0.9414);transform-origin:0 50%;">Ln 1, Col 1</div>
<div class="a" style="left:967.30px;top:730.80px;font-size:8.28px;line-height:15px;color:#ffffff;transform:scaleX(0.8989);transform-origin:0 50%;">Spaces: 2</div>
<div class="a" style="left:1011.20px;top:730.80px;font-size:8.28px;line-height:15px;color:#ffffff;transform:scaleX(0.9251);transform-origin:0 50%;">UTF-8</div>
<div class="a" style="left:1043.70px;top:730.80px;font-size:8.28px;line-height:15px;color:#ffffff;transform:scaleX(0.7909);transform-origin:0 50%;">CRLF</div>
<div class="a" style="left:1072.00px;top:730.80px;font-size:8.28px;line-height:15px;color:#ffffff;transform:scaleX(0.9507);transform-origin:0 50%;">Javascript (Babel)</div>
<div class="a" style="left:1144.80px;top:730.80px;font-size:8.28px;line-height:15px;color:#ffffff;transform:scaleX(0.9747);transform-origin:0 50%;">2.1.0-dev.20161010</div>
<div class="a" style="left:1226.50px;top:730.80px;font-size:8.28px;line-height:15px;color:#ffffff;transform:scaleX(0.8813);transform-origin:0 50%;">ESLint</div>
<svg class="a" style="left:1258.5px;top:732.5px" width="11" height="11" viewBox="0 0 11 11"><circle cx="5.5" cy="5.5" r="5.2" fill="#fff"/><circle cx="3.8" cy="4.2" r="0.9" fill="#007acc"/><circle cx="7.2" cy="4.2" r="0.9" fill="#007acc"/><path d="M2.8 6.3 Q5.5 9.3 8.2 6.3" stroke="#007acc" stroke-width="1" fill="none"/></svg>
</body></html>
